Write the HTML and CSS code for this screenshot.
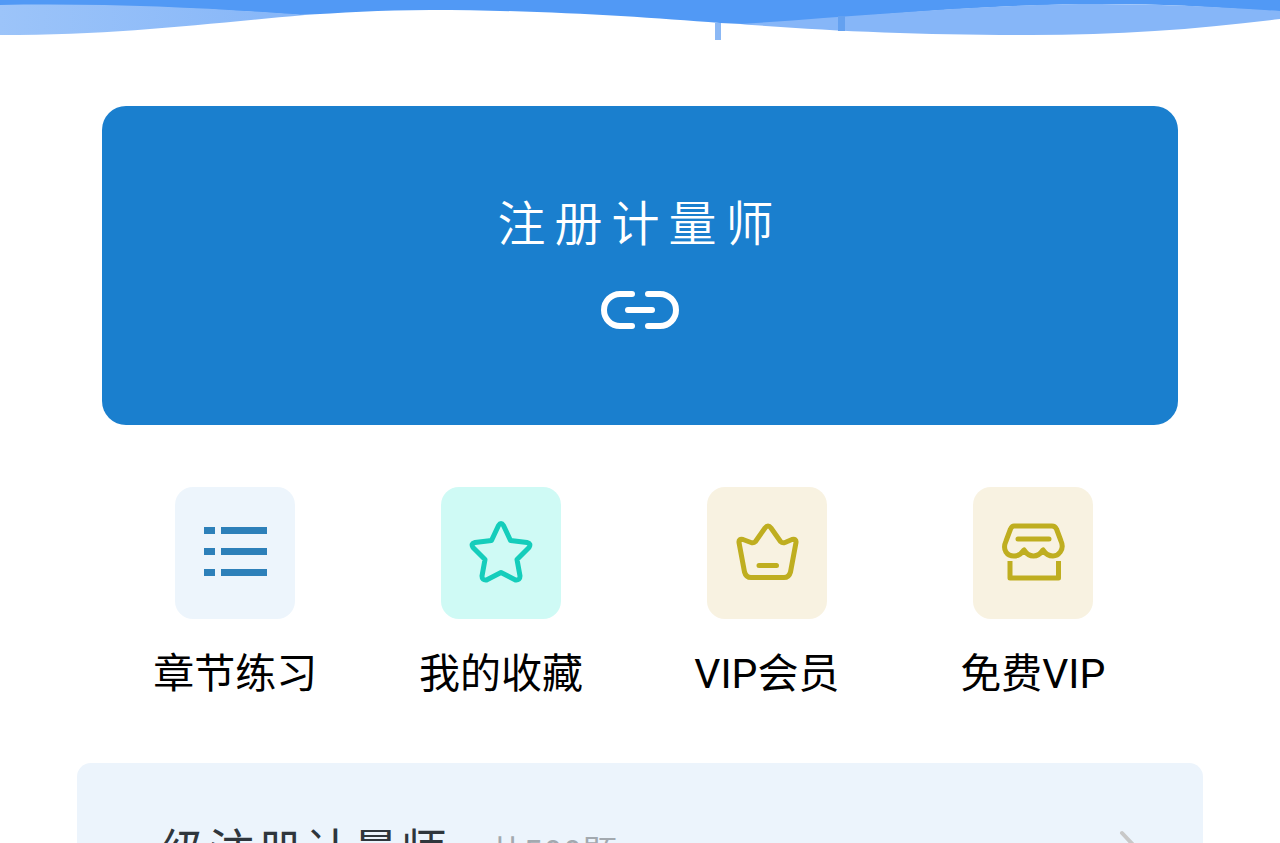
FILE: index.html
```html
<!DOCTYPE html>
<html lang="zh-CN">

<head>
    <meta charset="UTF-8">
    <meta name="viewport" content="width=device-width, initial-scale=1.0">
    <title>注册计量师</title>
    <link rel="stylesheet" href="styles.css">
</head>

<body>
    <header class="banner">
        <svg class="waves" viewBox="0 0 1280 42" preserveAspectRatio="none" aria-hidden="true">
            <defs>
                <linearGradient id="pale" x1="0" x2="1">
                    <stop offset="0" stop-color="#9cc4f9" />
                    <stop offset="1" stop-color="#86b6f8" />
                </linearGradient>
            </defs>
            <path fill="#5199f5" d="M0 0H1280V12Q1180 4 1110 4C980 4 850 17 765 25L720 23C640 17 540 10 430 10C380 10 340 13 300 15C200 8 120 5 0 5Z" />
            <path fill="url(#pale)" d="M0 5C120 3 220 9 305 15C200 24 120 35 0 35Z" />
            <path fill="#86b6f8" d="M740 24C850 17 980 4 1100 4Q1180 4 1280 11V19C1200 29 1120 35 1030 35C920 35 830 31 740 24Z" />
            <path fill="#8bb8f5" d="M715 23H721V40H715Z" />
            <path fill="#64a1f0" d="M838 16H845V31H838Z" />
        </svg>
    </header>

    <main class="content">
        <a class="card" href="#subject">
            <h1>注册计量师</h1>
            <svg class="link-icon" viewBox="0 0 78 38" aria-hidden="true">
                <path d="M31 3H19A16 16 0 0 0 19 35H31M47 3H59A16 16 0 0 1 59 35H47M27 19H51" />
            </svg>
        </a>

        <nav class="menu">
            <a class="item" href="#chapter">
                <span class="tile blue">
                    <svg viewBox="0 0 64 64" aria-hidden="true">
                        <path class="solid" d="M1 6H12V13H1ZM18 6H64V13H18ZM1 27H12V34H1ZM18 27H64V34H18ZM1 48H12V55H1ZM18 48H64V55H18Z" />
                    </svg>
                </span>
                章节练习
            </a>
            <a class="item" href="#favorite">
                <span class="tile green">
                    <svg viewBox="0 0 64 64" aria-hidden="true">
                        <path d="M29.5 4.500Q32 0.500 34.500 4.500L41.500 19.500L58 21.500Q62.500 22.500 60 26.500L48 38.500L51 55Q51 59.500 46.500 59L32 51.500L17.500 59Q13 59.500 13 55L16 38.500L4 26.500Q1.500 22.500 6 21.500L22.500 19.500Z" />
                    </svg>
                </span>
                我的收藏
            </a>
            <a class="item" href="#vip">
                <span class="tile gold">
                    <svg viewBox="0 0 64 64" aria-hidden="true">
                        <path d="M30 7Q33 3 36 7L45.500 20.500Q47.500 22.500 50 21.500L57 18.500Q61.500 17.500 61 21.500L55.500 51Q54 56.500 49 56.500H16Q11 56.500 9.500 51L4 21.500Q3.500 17.500 8 18.500L16 21.500Q18.500 22.500 20.500 20.500ZM24 44.500H41.500" />
                    </svg>
                </span>
                VIP会员
            </a>
            <a class="item" href="#free">
                <span class="tile gold">
                    <svg viewBox="0 0 64 64" aria-hidden="true">
                        <path d="M13 5H51Q54 5 55.500 8L60 20C64 29 57 35 52 35Q46 35 42 29Q38 35 32.500 35Q27 35 23 29Q19 35 13 35C6 35 1 29 5 20L9.500 8Q11 5 13 5ZM17 18H48" />
                        <path class="square" d="M9 40V57H57.500V40" />
                    </svg>
                </span>
                免费VIP
            </a>
        </nav>
    </main>

    <section class="list">
        <a class="row" href="#level1">
            <span class="name">一级注册计量师</span>
            <span class="count">共500题</span>
            <svg class="arrow" viewBox="0 0 24 42" aria-hidden="true">
                <path d="M3 3L20 21L3 39" />
            </svg>
        </a>
    </section>
</body>

</html>
```
FILE: styles.css
```css
body {
    margin: 0;
    height: 100vh;
    overflow: hidden;
    background-color: #fff;
    font-family: Roboto, "Noto Sans CJK SC", sans-serif;
    color: #000;
}

a {
    color: inherit;
    text-decoration: none;
}

svg {
    display: block;
    fill: none;
    stroke-linecap: round;
    stroke-linejoin: round;
}

.waves {
    width: 100%;
    height: 42px;
}

.content {
    padding: 64px 8% 0;
}

.card {
    display: flex;
    flex-direction: column;
    align-items: center;
    gap: 38px;
    padding: 81px 0 96px;
    border-radius: 24px;
    background-color: #1a7fce;
    color: #fff;
}

h1 {
    margin: 0;
    font-family: "Noto Sans CJK SC DemiLight", "Noto Sans CJK SC", sans-serif;
    font-size: 48px;
    font-weight: 350;
    line-height: 66px;
    letter-spacing: 9px;
}

.link-icon {
    width: 78px;
    height: 38px;
    stroke: #fff;
    stroke-width: 6;
}

.menu {
    display: grid;
    grid-template-columns: repeat(4, 1fr);
    margin: 62px 12px 0 0;
}

.item {
    display: flex;
    flex-direction: column;
    align-items: center;
    gap: 25px;
    font-size: 41px;
    line-height: 60px;
}

.tile {
    display: flex;
    align-items: center;
    justify-content: center;
    width: 120px;
    height: 132px;
    border-radius: 18px;
}

.tile svg {
    width: 64px;
    height: 64px;
    stroke: currentColor;
    stroke-width: 5;
}

.tile .solid {
    fill: currentColor;
    stroke: none;
}

.tile .square {
    stroke-linecap: butt;
}

.blue {
    background-color: #edf5fc;
    color: #2d80b9;
}

.green {
    background-color: #cffaf5;
    color: #15cdbb;
}

.gold {
    background-color: #f8f2e1;
    color: #bfae20;
}

.list {
    margin: 59px 6% 0;
    padding: 52px 60px 52px 36px;
    border-radius: 14px;
    background-color: #ecf4fc;
}

.row {
    display: flex;
    align-items: center;
}

.name {
    font-size: 46px;
    line-height: 72px;
    letter-spacing: 2px;
    color: #2f363c;
}

.count {
    margin-left: 40px;
    font-family: "Noto Sans CJK SC", sans-serif;
    font-size: 35px;
    line-height: 48px;
    color: #a3a9af;
}

.arrow {
    width: 24px;
    height: 42px;
    margin-left: auto;
    stroke: #c8c8c8;
    stroke-width: 4;
}
```
